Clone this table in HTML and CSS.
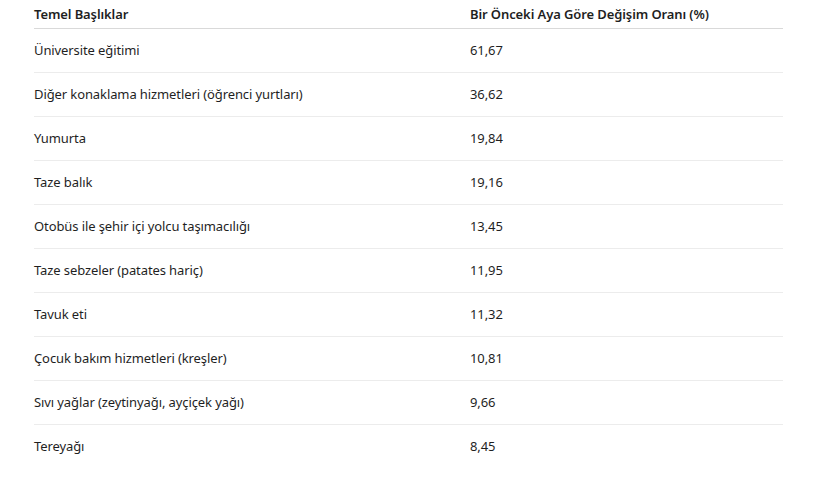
FILE: index.html
```html
<!DOCTYPE html>
<html lang="tr">
<head>
<meta charset="utf-8">
<link rel="stylesheet" href="styles.css">
</head>
<body>
<table class="data">
  <thead>
    <tr><th class="c1">Temel Başlıklar</th><th class="c2">Bir Önceki Aya Göre Değişim Oranı (%)</th></tr>
  </thead>
  <tbody>
    <tr><td>Üniversite eğitimi</td><td>61,67</td></tr>
    <tr><td>Diğer konaklama hizmetleri (öğrenci yurtları)</td><td>36,62</td></tr>
    <tr><td>Yumurta</td><td>19,84</td></tr>
    <tr><td>Taze balık</td><td>19,16</td></tr>
    <tr><td>Otobüs ile şehir içi yolcu taşımacılığı</td><td>13,45</td></tr>
    <tr><td>Taze sebzeler (patates hariç)</td><td>11,95</td></tr>
    <tr><td>Tavuk eti</td><td>11,32</td></tr>
    <tr><td>Çocuk bakım hizmetleri (kreşler)</td><td>10,81</td></tr>
    <tr><td>Sıvı yağlar (zeytinyağı, ayçiçek yağı)</td><td>9,66</td></tr>
    <tr><td>Tereyağı</td><td>8,45</td></tr>
  </tbody>
</table>
</body>
</html>
```
FILE: styles.css
```css
html, body {
  margin: 0;
  padding: 0;
  background: #ffffff;
}
body {
  padding: 0 37px 0 34px;
  font-family: "Noto Sans", "Open Sans", sans-serif;
  font-size: 13px;
  letter-spacing: -0.1px;
  color: #1f1f1f;
}
.data {
  width: 749px;
  border-collapse: collapse;
  table-layout: fixed;
}
.data th {
  text-align: left;
  font-weight: 600;
  height: 27px;
  padding: 0 0 1px 0;
  vertical-align: middle;
  border-bottom: 1px solid #d9d9d9;
}
.data th.c1 { width: 436px; }
.data td {
  height: 41px;
  padding: 0 0 2px 0;
  vertical-align: middle;
  border-bottom: 1px solid #ececec;
}
.data tbody tr:last-child td {
  border-bottom: none;
}
```
